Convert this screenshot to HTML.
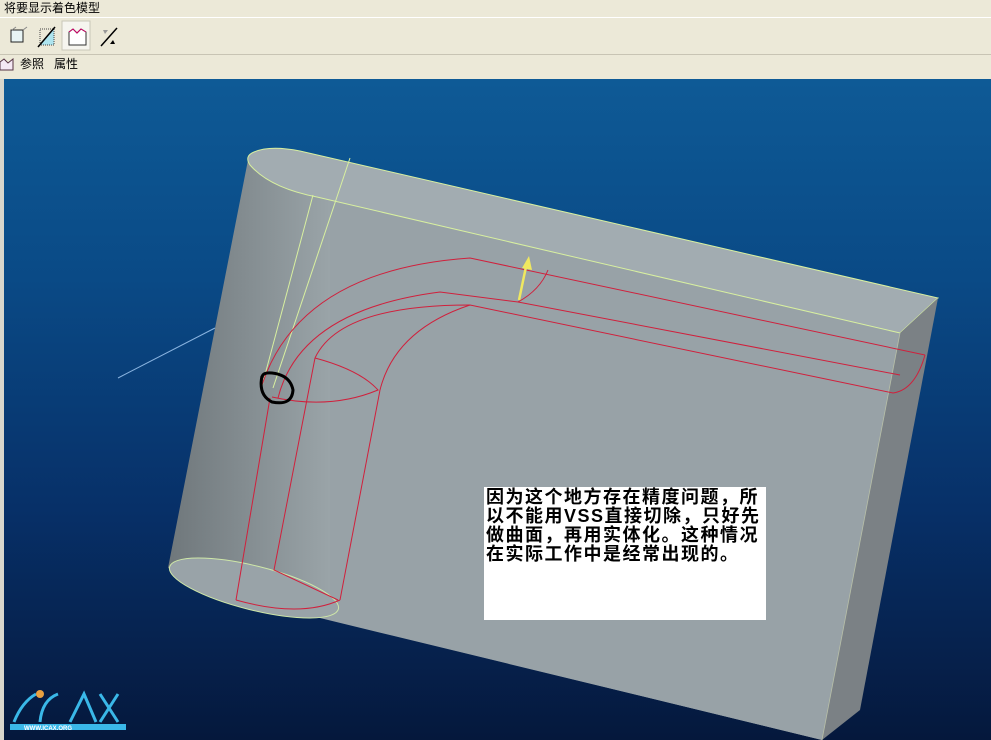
<!DOCTYPE html>
<html><head><meta charset="utf-8"><style>
body{margin:0;width:991px;height:740px;overflow:hidden;background:#ece9d8;font-family:"Liberation Sans","Noto Sans CJK SC",sans-serif;position:relative}
.t{position:absolute;left:4px;top:0;font-size:12px;color:#000;line-height:16px}
.tb{position:absolute;left:0;top:17px;width:991px;height:36px;border-top:1px solid #fff;border-bottom:1px solid #c8c4b4}
.tabs{position:absolute;left:0;top:54px;width:991px;height:24px;font-size:12px;line-height:20px}
.vp{position:absolute;left:4px;top:79px;width:987px;height:661px;background:linear-gradient(#0e5a96 0%,#0a4a86 30%,#073068 65%,#05183c 100%)}
.ls{position:absolute;left:0;top:79px;width:4px;height:661px;background:#d8d6cc;border-right:1px solid #a9c4e0}
.box{position:absolute;left:484px;top:487px;width:282px;height:133px;background:#fff;font-size:18px;line-height:19px;color:#000;font-weight:bold;padding:1px 0 0 2px;box-sizing:border-box;letter-spacing:1.5px;white-space:nowrap}
</style></head><body>
<div class="t">将要显示着色模型</div>
<div class="tb">
<svg width="140" height="36" style="position:absolute;left:0;top:0">
<rect x="11" y="12" width="12" height="12" fill="#e8f4f4" stroke="#222"/>
<line x1="12" y1="12" x2="16" y2="9" stroke="#888"/><line x1="23" y1="12" x2="27" y2="9" stroke="#888"/>
<polygon points="40,27 54,27 54,11" fill="#aee4ee"/><rect x="40" y="11" width="14" height="16" fill="none" stroke="#444" stroke-dasharray="1,1"/><line x1="38" y1="29" x2="55" y2="9" stroke="#000" stroke-width="1.5"/>
<rect x="62" y="3" width="28" height="29" fill="#f6f5ef" stroke="#c9c6b8"/>
<path d="M69,14 L73,11 L77,15 L81,11 L86,14 L86,27 L69,27 Z" fill="#fff" stroke="#333"/><path d="M69,14 L73,11 L77,15 L81,11 L86,14" fill="none" stroke="#c06"/>
<line x1="101" y1="28" x2="117" y2="10" stroke="#000" stroke-width="1.5"/><path d="M103,12 l5,0 l-3,4z" fill="#999"/><path d="M115,26 l-5,0 l3,-4z" fill="#000"/>
</svg></div>
<div class="tabs"><svg width="14" height="14" style="position:absolute;left:0;top:4px"><path d="M0,4 L4,1 L8,5 L13,1 L13,12 L0,12Z" fill="#f4e8f4" stroke="#534"/></svg>
<span style="position:absolute;left:20px;top:0">参照</span><span style="position:absolute;left:54px;top:0">属性</span></div>
<div class="ls"></div>
<div class="vp"></div>
<svg width="991" height="740" style="position:absolute;left:0;top:0">
<defs>
<linearGradient id="g1" x1="168" y1="0" x2="330" y2="0" gradientUnits="userSpaceOnUse"><stop offset="0" stop-color="#6f777b"/><stop offset="1" stop-color="#9aa4a8"/></linearGradient>
</defs>
<line x1="118" y1="378" x2="215" y2="328" stroke="#8ab4e0" stroke-width="1"/>
<path d="M248,160 L317,197 L900,333 L822,740 L320,618 L168,568 Z" fill="url(#g1)"/>
<path d="M330,200 L900,333 L822,740 L330,620 Z" fill="#98a2a7"/>
<ellipse cx="254" cy="588" rx="87" ry="22" transform="rotate(14 254 588)" fill="#99a3a8" stroke="#cfe8a8" stroke-width="1"/>
<path d="M290,150 L938,298 L900,333 L317,197 Z" fill="#a2acb1"/>
<path d="M254,152 Q270,145 300,151 L938,298 L900,333 L317,197 Q270,188 250,165 Q244,156 254,152Z" fill="#a2acb1" stroke="#d8f0a0" stroke-width="1"/>
<path d="M938,298 L900,333 L822,740 L860,710 Z" fill="#7b8185"/>
<line x1="900" y1="333" x2="822" y2="740" stroke="#b8c0a8" stroke-width="0.8"/>
<line x1="350" y1="158" x2="273" y2="388" stroke="#d8f0a0"/><line x1="313" y1="195" x2="262" y2="386" stroke="#d8f0a0"/>
<g fill="none" stroke="#d0203c" stroke-width="1">
<path d="M262,385 Q300,270 470,258 L925,355"/>
<path d="M278,398 Q300,310 440,292 L518,302 L900,375"/>
<path d="M315,358 Q340,305 470,305 L893,393 Q915,390 925,355"/>
<path d="M380,390 Q395,330 470,305"/>
<path d="M270,398 L236,600"/><path d="M315,358 L274,570 L338,600"/><path d="M380,390 L340,600"/>
<path d="M272,397 Q330,410 378,390 Q360,370 315,358"/>
<path d="M518,302 Q540,290 548,270"/>
<path d="M236,600 Q300,618 340,600"/>
</g>
<line x1="519" y1="300" x2="527" y2="262" stroke="#f0e860" stroke-width="2.5"/><path d="M522,268 L529,256 L532,270Z" fill="#f0e860"/>
<path d="M262,376 Q258,395 272,402 Q292,406 293,390 Q290,375 272,373 Q262,372 262,378" fill="none" stroke="#000" stroke-width="3"/>
<g fill="none" stroke="#3ab8e8" stroke-width="3">
<path d="M14,722 Q22,702 36,694"/><path d="M58,694 Q42,700 40,722"/>
<path d="M70,722 L84,694 L96,722"/><path d="M100,694 L118,722 M118,694 L100,722"/>
</g>
<circle cx="40" cy="694" r="4" fill="#e8a040"/>
<rect x="10" y="724" width="116" height="6" fill="#3ab8e8"/>
<text x="24" y="730" font-size="6" fill="#fff" font-family="Liberation Sans" font-weight="bold">WWW.ICAX.ORG</text>
</svg>
<div class="box">因为这个地方存在精度问题，所<br>以不能用VSS直接切除，只好先<br>做曲面，再用实体化。这种情况<br>在实际工作中是经常出现的。</div>
</body></html>
